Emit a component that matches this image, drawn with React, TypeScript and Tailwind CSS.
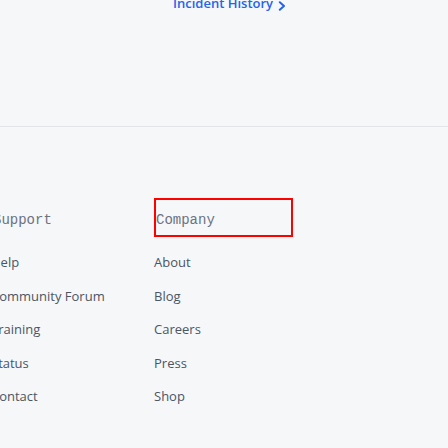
const support = ["Help", "Community Forum", "Training", "Status", "Contact"];
const company = ["About", "Blog", "Careers", "Press", "Shop"];

function Column({
  title,
  links,
  outlined = false,
}: {
  title: string;
  links: string[];
  outlined?: boolean;
}) {
  return (
    <div className="w-[139px] shrink-0">
      <h3
        className={`h-[39px] border-2 pt-[10px] font-mono text-[14px] leading-5 text-[#6b7280] ${
          outlined ? "border-[#ff0000]" : "border-transparent"
        }`}
      >
        {title}
      </h3>
      <ul className="mt-[15px] flex flex-col gap-[13.5px]">
        {links.map((l) => (
          <li key={l} className="text-[13px] leading-5">
            <a href="#" className="text-[#4b5563]">
              {l}
            </a>
          </li>
        ))}
      </ul>
    </div>
  );
}

export default function App() {
  return (
    <div
      className="h-screen overflow-hidden bg-[#f6f7f9]"
      style={{ fontFamily: '"Open Sans", "Noto Sans", sans-serif' }}
    >
      <div className="h-[134px] border-b border-[#e2e4e8]">
        <a
          href="#"
          className="-mt-[7px] ml-[173px] flex gap-[5px] text-[13px] font-semibold leading-5 text-[#2563eb]"
        >
          Incident History
          <svg
            viewBox="0 0 8 10"
            className="mt-[8px] h-[10px] w-[8px]"
            fill="none"
            stroke="currentColor"
            strokeWidth={2}
            strokeLinecap="round"
            strokeLinejoin="round"
          >
            <path d="M1.8 1.2L6 5L1.8 8.8" />
          </svg>
        </a>
      </div>
      <div className="ml-[-9px] mt-[71px] flex gap-6">
        <Column title="Support" links={support} />
        <Column title="Company" links={company} outlined />
      </div>
    </div>
  );
}
